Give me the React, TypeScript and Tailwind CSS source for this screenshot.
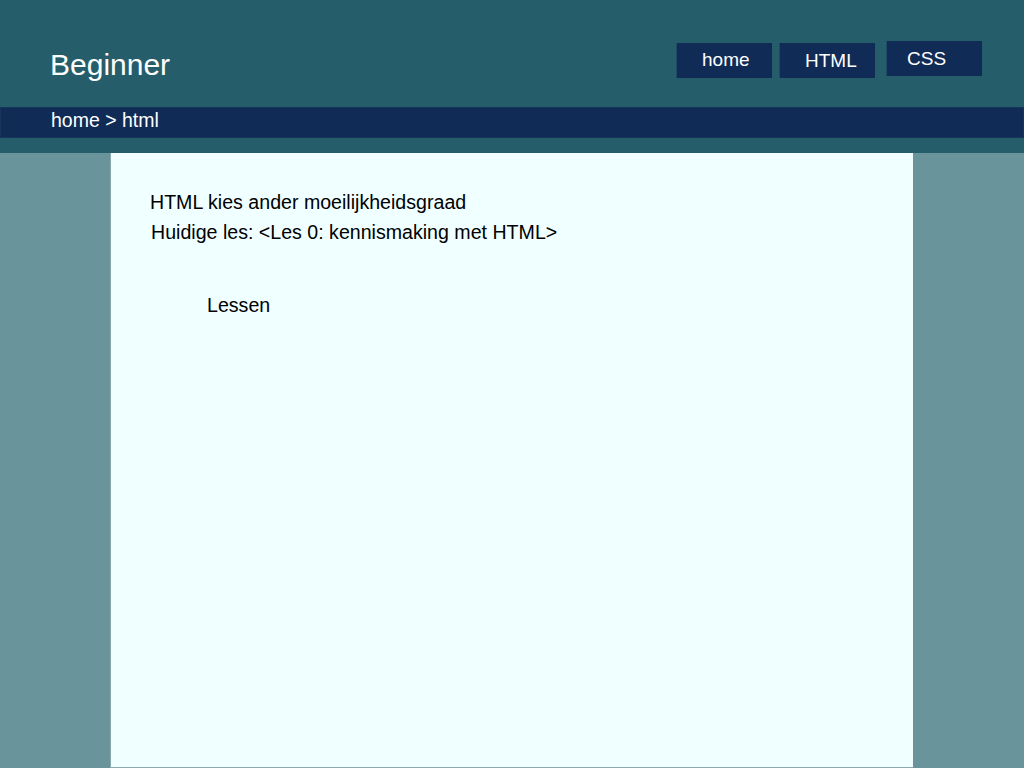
import React from "react";

export default function App() {
  return (
    <div
      className="min-h-[768px] w-full bg-[#6a949c] text-black"
      style={{ fontFamily: '"Liberation Sans", Arial, sans-serif' }}
    >
      <div className="bg-[#265d6a]">
        <div className="flex h-[107px] items-start justify-between">
          <div className="pl-[50px] pt-[45px] text-[30px] leading-[40px] text-white">Beginner</div>
          <div className="mr-[42px] mt-[41px] flex items-start">
            <div className="mt-[2px] h-[35px] w-[96px] border-l border-[#1f4a63] bg-[#112b57] pl-[25px] text-[19px] leading-[33px] text-white">
              home
            </div>
            <div className="ml-[7px] mt-[2px] h-[35px] w-[96px] border-l border-[#1f4a63] bg-[#112b57] pl-[25px] text-[19px] leading-[35px] text-white">
              HTML
            </div>
            <div className="ml-[11px] h-[35px] w-[96px] border-l border-[#1f4a63] bg-[#112b57] pl-[20px] text-[19px] leading-[35px] text-white">
              CSS
            </div>
          </div>
        </div>
        <div className="h-[31px] border border-[#17345a] bg-[#112b57] pl-[50px] text-[19.5px] leading-[25px] text-white">
          home &gt; html
        </div>
        <div className="h-[15px]" />
      </div>
      <div className="flex justify-center">
        <div className="ml-[-1px] h-[615px] w-[803px] border-b border-l border-[#8aa8ae] bg-[#f0ffff] pl-[39px] pt-[34px] text-[19.6px]">
          <div className="leading-[30px]">HTML kies ander moeilijkheidsgraad</div>
          <div className="pl-[1px] leading-[30px]">Huidige les: &lt;Les 0: kennismaking met HTML&gt;</div>
          <div className="pl-[57px] pt-[43px] leading-[30px]">Lessen</div>
        </div>
      </div>
    </div>
  );
}
